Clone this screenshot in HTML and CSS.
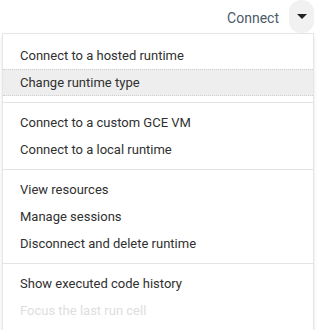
FILE: index.html
```html
<!DOCTYPE html>
<html>
<head>
    <title>Runtime menu</title>
    <link rel="stylesheet" href="styles.css">
</head>
<body>
    <div class="toolbar">
        <span class="connect">Connect</span>
        <button class="dropdown-btn" aria-label="More options">
            <svg width="10" height="5" viewBox="0 0 10 5"><path d="M0 0h10L5 5z" fill="#212121"/></svg>
        </button>
    </div>

    <div class="menu">
        <div class="item">Connect to a hosted runtime</div>
        <div class="item focused">Change runtime type</div>
        <div class="divider"></div>
        <div class="item">Connect to a custom GCE VM</div>
        <div class="item">Connect to a local runtime</div>
        <div class="divider"></div>
        <div class="item">View resources</div>
        <div class="item">Manage sessions</div>
        <div class="item">Disconnect and delete runtime</div>
        <div class="divider"></div>
        <div class="item">Show executed code history</div>
        <div class="item disabled">Focus the last run cell</div>
    </div>
</body>
</html>
```

FILE: styles.css
```css
body { font-family: Roboto, "Noto Sans", sans-serif; background: #fff; margin: 0; padding: 0; }
.toolbar { display: flex; justify-content: flex-end; align-items: center; height: 34px; padding-right: 7px; }
.connect { font-size: 14px; color: #4b5968; margin-right: 10px; margin-top: 1px; }
.dropdown-btn { width: 25px; height: 33px; border: none; border-radius: 12px; background: #f1f1f1; display: flex; align-items: center; justify-content: center; padding: 0; margin-top: -1px; }
.menu { margin-left: 3px; width: 310px; background: #fff; padding: 8px 0 6px; box-shadow: 0 0 0 1px #e6e6e6, 0 2px 4px rgba(0,0,0,0.18); }
.item { height: 27px; line-height: 28px; padding: 0 17px; font-size: 13px; color: #303030; box-sizing: border-box; white-space: nowrap; }
.item.focused { background: #eeeeee; border-top: 1px dotted #cfcfcf; border-bottom: 1px dotted #cfcfcf; line-height: 26px; }
.item.disabled { color: #dedede; }
.divider { height: 1px; background: #e3e3e3; margin: 6px 0; }
```
